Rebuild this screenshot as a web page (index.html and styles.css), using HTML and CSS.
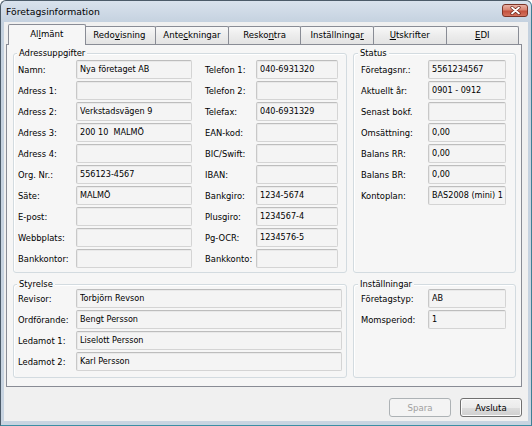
FILE: index.html
```html
<!DOCTYPE html>
<html lang="sv">
<head>
<meta charset="UTF-8">
<title>Företagsinformation</title>
<link rel="stylesheet" href="styles.css">
</head>
<body>

<div class="window">
  <div class="titlebar">
    <span class="title">Företagsinformation</span>
    <div class="close-btn">
      <svg width="11" height="9" viewBox="0 0 11 9">
        <path d="M2 1.5 L9 7.5 M9 1.5 L2 7.5" stroke="#6b2418" stroke-width="3.2" stroke-linecap="round"/>
        <path d="M2 1.5 L9 7.5 M9 1.5 L2 7.5" stroke="#fff" stroke-width="1.8" stroke-linecap="round"/>
      </svg>
    </div>
  </div>

  <div class="client">
    <div class="tabs">
      <div class="tab active">Al<u>l</u>mänt</div>
      <div class="tab">Redo<u>v</u>isning</div>
      <div class="tab">Ante<u>c</u>kningar</div>
      <div class="tab">Resko<u>n</u>tra</div>
      <div class="tab">Inställninga<u>r</u></div>
      <div class="tab"><u>U</u>tskrifter</div>
      <div class="tab"><u>E</u>DI</div>
    </div>

    <div class="panel">
      <div class="group address">
        <span class="legend">Adressuppgifter</span>
        <div class="col">
          <div class="row"><label>Namn:</label><input type="text" readonly value="Nya företaget AB"></div>
          <div class="row"><label>Adress 1:</label><input type="text" readonly value=""></div>
          <div class="row"><label>Adress 2:</label><input type="text" readonly value="Verkstadsvägen 9"></div>
          <div class="row"><label>Adress 3:</label><input type="text" readonly value="200 10  MALMÖ"></div>
          <div class="row"><label>Adress 4:</label><input type="text" readonly value=""></div>
          <div class="row"><label>Org. Nr.:</label><input type="text" readonly value="556123-4567"></div>
          <div class="row"><label>Säte:</label><input type="text" readonly value="MALMÖ"></div>
          <div class="row"><label>E-post:</label><input type="text" readonly value=""></div>
          <div class="row"><label>Webbplats:</label><input type="text" readonly value=""></div>
          <div class="row"><label>Bankkontor:</label><input type="text" readonly value=""></div>
        </div>
        <div class="col col-right">
          <div class="row"><label>Telefon 1:</label><input type="text" readonly value="040-6931320"></div>
          <div class="row"><label>Telefon 2:</label><input type="text" readonly value=""></div>
          <div class="row"><label>Telefax:</label><input type="text" readonly value="040-6931329"></div>
          <div class="row"><label>EAN-kod:</label><input type="text" readonly value=""></div>
          <div class="row"><label>BIC/Swift:</label><input type="text" readonly value=""></div>
          <div class="row"><label>IBAN:</label><input type="text" readonly value=""></div>
          <div class="row"><label>Bankgiro:</label><input type="text" readonly value="1234-5674"></div>
          <div class="row"><label>Plusgiro:</label><input type="text" readonly value="1234567-4"></div>
          <div class="row"><label>Pg-OCR:</label><input type="text" readonly value="1234576-5"></div>
          <div class="row"><label>Bankkonto:</label><input type="text" readonly value=""></div>
        </div>
      </div>

      <div class="group status">
        <span class="legend">Status</span>
        <div class="col">
          <div class="row"><label>Företagsnr.:</label><input type="text" readonly value="5561234567"></div>
          <div class="row"><label>Aktuellt år:</label><input type="text" readonly value="0901 - 0912"></div>
          <div class="row"><label>Senast bokf.</label><input type="text" readonly value=""></div>
          <div class="row"><label>Omsättning:</label><input type="text" readonly value="0,00"></div>
          <div class="row"><label>Balans RR:</label><input type="text" readonly value="0,00"></div>
          <div class="row"><label>Balans BR:</label><input type="text" readonly value="0,00"></div>
          <div class="row"><label>Kontoplan:</label><input type="text" readonly value="BAS2008 (mini) 1"></div>
        </div>
      </div>

      <div class="group board">
        <span class="legend">Styrelse</span>
        <div class="col">
          <div class="row"><label>Revisor:</label><input type="text" readonly value="Torbjörn Revson"></div>
          <div class="row"><label>Ordförande:</label><input type="text" readonly value="Bengt Persson"></div>
          <div class="row"><label>Ledamot 1:</label><input type="text" readonly value="Liselott Persson"></div>
          <div class="row"><label>Ledamot 2:</label><input type="text" readonly value="Karl Persson"></div>
        </div>
      </div>

      <div class="group settings">
        <span class="legend">Inställningar</span>
        <div class="col">
          <div class="row"><label>Företagstyp:</label><input type="text" readonly value="AB"></div>
          <div class="row"><label>Momsperiod:</label><input type="text" readonly value="1"></div>
        </div>
      </div>
    </div>

    <div class="actions">
      <button disabled>Spara</button>
      <button>Avsluta</button>
    </div>
  </div>
</div>

</body>
</html>
```

FILE: styles.css
```css
* {
  box-sizing: border-box;
}
body {
  margin: 0;
  font-family: 'DejaVu Sans', Tahoma, Verdana, sans-serif;
  font-size: 8.4px;
  color: #000;
  background-color: #fff;
}
.window {
  width: 532px;
  height: 426px;
  border: 1px solid #4c5b69;
  border-bottom-color: #3c8ea4;
  border-right-color: #3f7f94;
  border-radius: 6px 6px 0 0;
  background: linear-gradient(#d9e2ed, #c4d1df 22px, #c8d4e1);
  padding: 0 3px 4px;
  display: flex;
  flex-direction: column;
}
.titlebar {
  height: 21px;
  display: flex;
  justify-content: space-between;
  padding-left: 2px;
}
.title {
  font-size: 9.3px;
  line-height: 21px;
}
.close-btn {
  width: 26px;
  height: 13px;
  margin-top: 3px;
  border: 1px solid #7d3427;
  border-radius: 3px;
  background: linear-gradient(#eab3a6, #d98472 45%, #c3513d 55%, #d5735e);
  display: flex;
  align-items: center;
  justify-content: center;
}
.client {
  flex: 1;
  background-color: #f0f0f0;
  padding: 2px 6px 4px 2px;
  display: flex;
  flex-direction: column;
}

/* tabs */
.tabs {
  display: flex;
  align-items: flex-end;
  height: 20px;
  padding-left: 4px;
  position: relative;
  z-index: 1;
}
.tab {
  flex: none;
  width: 73.6px;
  height: 18px;
  margin-right: -1px;
  border: 1px solid #898c95;
  border-bottom: none;
  border-radius: 2px 2px 0 0;
  background: linear-gradient(#f8f8f8, #ececec 50%, #e3e3e3);
  text-align: center;
  line-height: 17px;
  font-size: 8.6px;
}
.tab.active {
  width: 77.6px;
  height: 21px;
  margin: 0 -3px -1px -2px;
  background: #f6f6f6;
  line-height: 19px;
  position: relative;
  z-index: 2;
}
u {
  text-decoration-thickness: 1px;
  text-underline-offset: 1px;
}

/* panel with group boxes */
.panel {
  height: 343px;
  border: 1px solid #898c95;
  background-color: #f6f6f6;
  padding: 8px 5px 8px 6px;
  display: grid;
  grid-template-columns: 334px 163px;
  grid-template-rows: 220px 94px;
  column-gap: 6px;
  row-gap: 11px;
}
.group {
  position: relative;
  border: 1px solid #d3dbe0;
  border-radius: 3px;
  box-shadow: inset 1px 1px 0 #fff;
  display: flex;
}
.legend {
  position: absolute;
  top: -7px;
  left: 3px;
  padding: 0 2px;
  line-height: 12px;
  background-color: #f6f6f6;
}
.status .legend,
.settings .legend {
  left: 4px;
}
.address {
  padding: 6px 0 0 4px;
  gap: 13px;
}
.status {
  padding: 6px 0 0 7px;
}
.board {
  padding: 4px 0 0 4px;
}
.settings {
  padding: 4px 0 0 7px;
}
.row {
  display: flex;
  height: 19px;
  margin-bottom: 2px;
}
label {
  flex: none;
  width: 58px;
  padding-top: 5px;
  white-space: nowrap;
}
.col-right label {
  width: 51px;
}
.status label,
.settings label {
  width: 67px;
}
input {
  width: 116px;
  height: 19px;
  padding: 0 2px 1px 3px;
  font: inherit;
  font-size: 8.1px;
  line-height: 16px;
  color: #000;
  background-color: #f4f4f4;
  border: 1px solid #d4d4d4;
  border-top-color: #bdbdbd;
  border-left-color: #c8c8c8;
  border-radius: 2px;
  box-shadow: inset 1px 1px 0 #e9e9e9;
  outline: none;
}
.col-right input {
  width: 82px;
}
.status input,
.settings input {
  width: 78px;
}
.board input {
  width: 266px;
}

/* bottom buttons */
.actions {
  display: flex;
  justify-content: flex-end;
  gap: 9px;
  margin-top: 11px;
}
button {
  width: 62px;
  height: 19px;
  font: inherit;
  font-size: 8.6px;
  color: #000;
  border: 1px solid #707070;
  border-radius: 3px;
  background: linear-gradient(#f2f2f2, #ebebeb 50%, #dddddd 50%, #cfcfcf);
  box-shadow: inset 0 0 0 1px #fcfcfc;
  padding: 0;
}
button:disabled {
  color: #a0a0a0;
  border-color: #adb2b5;
  background: #f4f4f4;
  box-shadow: none;
}
```
